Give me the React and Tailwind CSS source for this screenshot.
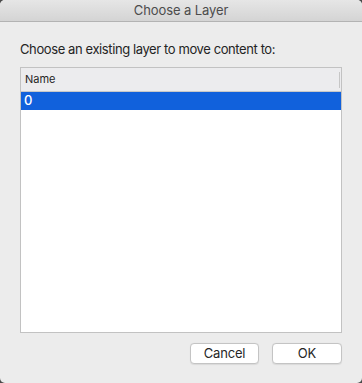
import React from 'react';

const App = () => {
  return (
    <div className="w-[362px] h-[383px] bg-[#4a4a4a] font-['Inter',sans-serif]">
      <div className="w-full h-full bg-[#ececec] rounded-[5px] overflow-hidden flex flex-col">
        {/* Title bar */}
        <div className="h-[22px] shrink-0 bg-gradient-to-b from-[#e6e6e6] to-[#d4d4d4] border-b border-[#b3b3b3] flex items-center justify-center">
          <span className="text-[13px] text-[#4c4c4c] leading-none tracking-[-0.1px]">Choose a Layer</span>
        </div>

        <div className="flex flex-col px-5 pt-[19px]">
          <p className="text-[13px] text-[#242424] leading-4 tracking-[-0.4px]">Choose an existing layer to move content to:</p>

          {/* Layer list */}
          <div className="mt-[10px] h-[266px] border border-[#c2c2c2] bg-white flex flex-col">
            <div className="h-[24px] bg-[#ececee] border-b border-[#c8c8c8] flex items-center justify-between pl-1">
              <span className="text-[11px] text-[#262626]">Name</span>
              <span className="w-px h-[16px] bg-[#c6c6c6] mr-px" />
            </div>
            <div className="h-[18px] bg-[#1161dc] flex items-center pl-[3px]">
              <span className="text-[13px] text-white font-medium">0</span>
            </div>
          </div>

          {/* Buttons */}
          <div className="flex justify-end gap-[13px] mt-[10px]">
            <button className="w-[69px] h-[21px] bg-white border border-[#c4c4c4] rounded-[4px] text-[13px] text-[#262626] leading-none tracking-[-0.2px] shadow-[0_0.5px_1px_rgba(0,0,0,0.08)]">
              Cancel
            </button>
            <button className="w-[70px] h-[21px] bg-white border border-[#c4c4c4] rounded-[4px] text-[13px] text-[#262626] leading-none shadow-[0_0.5px_1px_rgba(0,0,0,0.08)]">
              OK
            </button>
          </div>
        </div>
      </div>
    </div>
  );
};

export default App;
